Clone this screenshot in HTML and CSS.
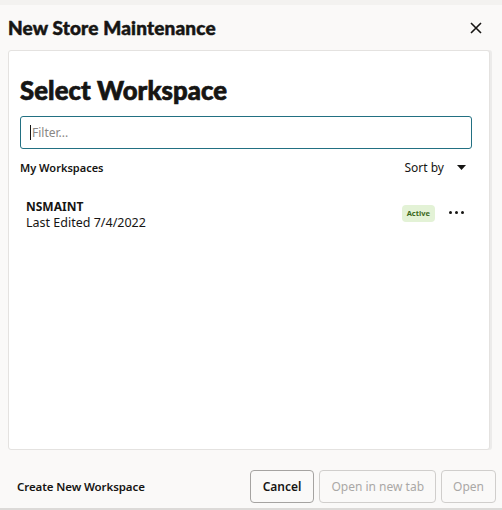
FILE: index.html
```html
<!DOCTYPE html>
<html>
<head>
<meta charset="utf-8">
<link rel="stylesheet" href="styles.css">
</head>
<body>
<div class="dialog">
  <div class="header">
    <h1 class="title">New Store Maintenance</h1>
    <button class="close" aria-label="Close">
      <svg width="12" height="12" viewBox="0 0 12 12"><path d="M1 1L11 11M11 1L1 11" stroke="#161513" stroke-width="1.6" fill="none"/></svg>
    </button>
  </div>
  <div class="card">
    <h2 class="heading">Select Workspace</h2>
    <div class="filter"><span class="caret"></span><span class="placeholder">Filter...</span></div>
    <div class="listbar">
      <span class="mylabel">My Workspaces</span>
      <span class="sort">Sort by <svg width="9" height="5" viewBox="0 0 9 5"><path d="M0 0H9L4.5 5Z" fill="#161513"/></svg></span>
    </div>
    <div class="item">
      <div class="info">
        <div class="name">NSMAINT</div>
        <div class="edited">Last Edited 7/4/2022</div>
      </div>
      <span class="badge">Active</span>
      <span class="more"><i></i><i></i><i></i></span>
    </div>
  </div>
  <div class="footer">
    <span class="create">Create New Workspace</span>
    <div class="buttons">
      <button class="btn">Cancel</button>
      <button class="btn disabled">Open in new tab</button>
      <button class="btn disabled">Open</button>
    </div>
  </div>
</div>
</body>
</html>
```
FILE: styles.css
```css
* { box-sizing: border-box; }
html, body { margin: 0; padding: 0; }
body {
  width: 502px; height: 510px; overflow: hidden;
  background: #faf9f8;
  font-family: "Noto Sans", "Open Sans", sans-serif;
  color: #161513;
  border-bottom: 2px solid #dcdad8;
}
.dialog { display: flex; flex-direction: column; height: 508px; border-top: 5px solid #f3f2f0; }
.header {
  display: flex; align-items: center; justify-content: space-between;
  height: 45px; padding: 0 20px 0 8px;
}
.title {
  margin: 0; font-family: Lato, "Noto Sans", sans-serif; font-size: 19px; font-weight: 900;
  letter-spacing: 0.15px; -webkit-text-stroke: 0.5px #161513;
}
.close { border: 0; background: none; padding: 0; display: flex; margin-top: 1px; }
.card {
  margin: 0 12px 0 8px;
  height: 400px;
  background: #fff;
  border: 1px solid #e4e2e0;
  border-radius: 3px;
  padding: 0 17px 0 11px;
  box-shadow: 2px 0 0 #ecebea;
}
.heading {
  margin: 24px 0 0; font-family: Lato, "Noto Sans", sans-serif; font-size: 25.7px; font-weight: 900;
  line-height: 30px; letter-spacing: 0.1px; -webkit-text-stroke: 0.7px #161513;
}
.filter {
  margin-top: 11px; height: 33px;
  border: 1px solid #227082; border-radius: 3px;
  display: flex; align-items: center; padding-left: 9px;
}
.caret { width: 1px; height: 15px; background: #161513; margin-right: 1px; }
.placeholder { font-size: 12px; color: #8a8785; }
.listbar { display: flex; justify-content: space-between; align-items: center; margin-top: 10px; height: 16px; }
.mylabel { font-size: 11px; font-weight: 600; }
.sort { font-size: 12px; display: flex; align-items: center; gap: 13px; padding-right: 7px; margin-right: -1px; }
.item { display: flex; align-items: center; margin-top: 24px; padding-left: 6px; }
.info { flex: 1; }
.name { font-size: 12px; font-weight: 700; line-height: 16px; }
.edited { font-size: 12.5px; line-height: 16px; }
.badge {
  background: #e3f2d6; color: #3d6a1e; font-size: 7.5px; font-weight: 700;
  padding: 0 5px; height: 17px; line-height: 17px; border-radius: 4px; margin-right: 14px;
  margin-top: -4px;
}
.more { display: flex; gap: 3px; padding-right: 8px; margin-top: -5px; }
.more i { width: 3px; height: 3px; border-radius: 50%; background: #161513; display: block; }
.footer {
  flex: 1; display: flex; align-items: center; justify-content: space-between;
  padding: 14px 6px 0 17px;
}
.create { font-size: 11.5px; font-weight: 600; letter-spacing: -0.1px; margin-top: 1px; }
.buttons { display: flex; gap: 5px; margin-top: 1px; }
.btn {
  height: 33px; border: 1px solid #a5a3a1; border-radius: 4px; background: #faf9f8;
  font-family: inherit; font-size: 12px; font-weight: 600; color: #161513; padding: 0 12px;
}
.btn.disabled { color: #aaa8a6; font-weight: 400; border-color: #d0cecc; padding: 0 11px; }
```
